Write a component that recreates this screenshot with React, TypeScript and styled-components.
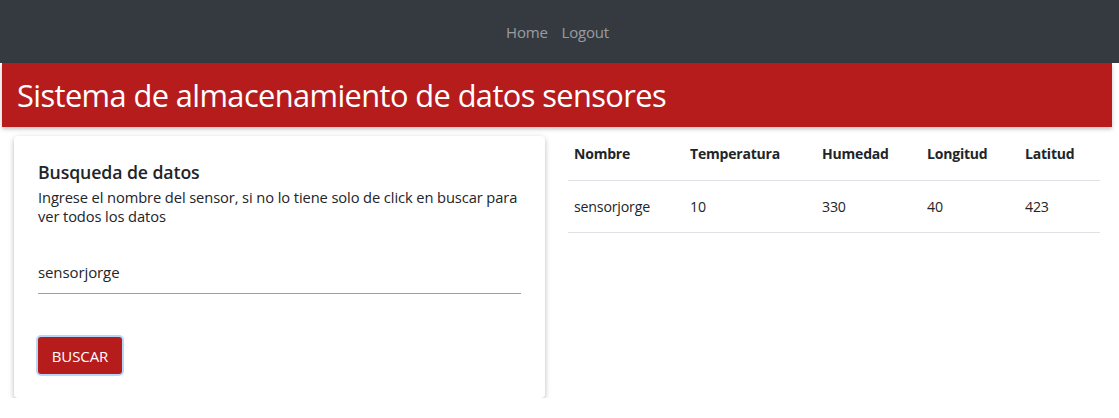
import React from "react";
import styled, { createGlobalStyle } from "styled-components";

const GlobalStyle = createGlobalStyle`
  html, body { margin: 0; padding: 0; background: #fff; }
  body {
    font-family: "Open Sans", "Noto Sans", Arial, sans-serif;
    color: #212529;
    -webkit-font-smoothing: antialiased;
  }
  * { box-sizing: border-box; }
`;

const NavBar = styled.nav`
  height: 63px;
  background: #343a40;
  display: flex;
  align-items: center;
  justify-content: center;
  gap: 14px;
  padding-right: 4px;
`;

const NavLink = styled.a`
  color: rgba(255, 255, 255, 0.5);
  font-size: 15px;
  letter-spacing: -0.2px;
  text-decoration: none;
  line-height: 20px;
`;

const Banner = styled.header`
  height: 64px;
  margin: 0 7px 0 2px;
  background: #b71c1c;
  display: flex;
  align-items: center;
  padding-left: 15px;
  box-shadow: 0 2px 4px rgba(0, 0, 0, 0.25);
  position: relative;
  z-index: 1;
`;

const BannerTitle = styled.h1`
  margin: 0 0 1px;
  color: #fff;
  font-size: 30.8px;
  font-weight: 400;
  letter-spacing: -0.6px;
  line-height: 40px;
`;

const Main = styled.main`
  display: grid;
  grid-template-columns: 531px 532px;
  column-gap: 23px;
  padding: 9px 0 0 14px;
  align-items: start;
`;

const Card = styled.section`
  background: #fff;
  border-radius: 4px;
  padding: 24px 24px 24px 24px;
  box-shadow: 0 2px 5px 0 rgba(0, 0, 0, 0.16), 0 2px 6px 0 rgba(0, 0, 0, 0.12);
  height: 262px;
  display: flex;
  flex-direction: column;
`;

const CardTitle = styled.h2`
  margin: 0 0 4px;
  font-size: 17.7px;
  font-weight: 600;
  line-height: 24px;
  letter-spacing: -0.1px;
`;

const CardText = styled.p`
  margin: 0;
  font-size: 14.7px;
  font-weight: 500;
  line-height: 19px;
  letter-spacing: -0.1px;
  color: #212529;
`;

const Field = styled.div`
  margin-top: 24px;
  border-bottom: 1px solid #9e9e9e;
  height: 44px;
  display: flex;
  align-items: center;
`;

const FieldInput = styled.input`
  border: none;
  outline: none;
  background: transparent;
  padding: 0;
  font-family: inherit;
  font-size: 15px;
  letter-spacing: -0.1px;
  color: #212529;
  width: 100%;
`;

const Button = styled.button`
  margin-top: auto;
  align-self: flex-start;
  width: 84px;
  height: 37px;
  border: none;
  border-radius: 3px;
  background: #b71c1c;
  color: #fff;
  font-family: inherit;
  font-size: 15px;
  letter-spacing: -0.1px;
  box-shadow: 0 0 0 2px #b8d6f8;
  cursor: pointer;
`;

const Table = styled.table`
  border-collapse: collapse;
  width: 532px;
`;

const Th = styled.th<{ $w: number }>`
  width: ${(p) => p.$w}px;
  text-align: left;
  vertical-align: top;
  font-weight: 700;
  font-size: 14px;
  letter-spacing: -0.2px;
  line-height: 20px;
  padding: 8px 6px 0;
  height: 44px;
  border-bottom: 1px solid #dee2e6;
`;

const Td = styled.td`
  font-size: 14.2px;
  letter-spacing: -0.2px;
  padding: 0 6px;
  height: 52px;
  border-bottom: 1px solid #dee2e6;
`;

const columns = [
  { label: "Nombre", w: 116 },
  { label: "Temperatura", w: 132 },
  { label: "Humedad", w: 105 },
  { label: "Longitud", w: 98 },
  { label: "Latitud", w: 81 },
];

const rows = [["sensorjorge", "10", "330", "40", "423"]];

export default function App() {
  return (
    <>
      <GlobalStyle />
      <NavBar>
        <NavLink href="#">Home</NavLink>
        <NavLink href="#">Logout</NavLink>
      </NavBar>
      <Banner>
        <BannerTitle>Sistema de almacenamiento de datos sensores</BannerTitle>
      </Banner>
      <Main>
        <Card>
          <CardTitle>Busqueda de datos</CardTitle>
          <CardText>
            Ingrese el nombre del sensor, si no lo tiene solo de click en buscar para ver todos los datos
          </CardText>
          <Field>
            <FieldInput defaultValue="sensorjorge" />
          </Field>
          <Button>BUSCAR</Button>
        </Card>
        <Table>
          <thead>
            <tr>
              {columns.map((c) => (
                <Th key={c.label} $w={c.w}>
                  {c.label}
                </Th>
              ))}
            </tr>
          </thead>
          <tbody>
            {rows.map((r, i) => (
              <tr key={i}>
                {r.map((v, j) => (
                  <Td key={j}>{v}</Td>
                ))}
              </tr>
            ))}
          </tbody>
        </Table>
      </Main>
    </>
  );
}
